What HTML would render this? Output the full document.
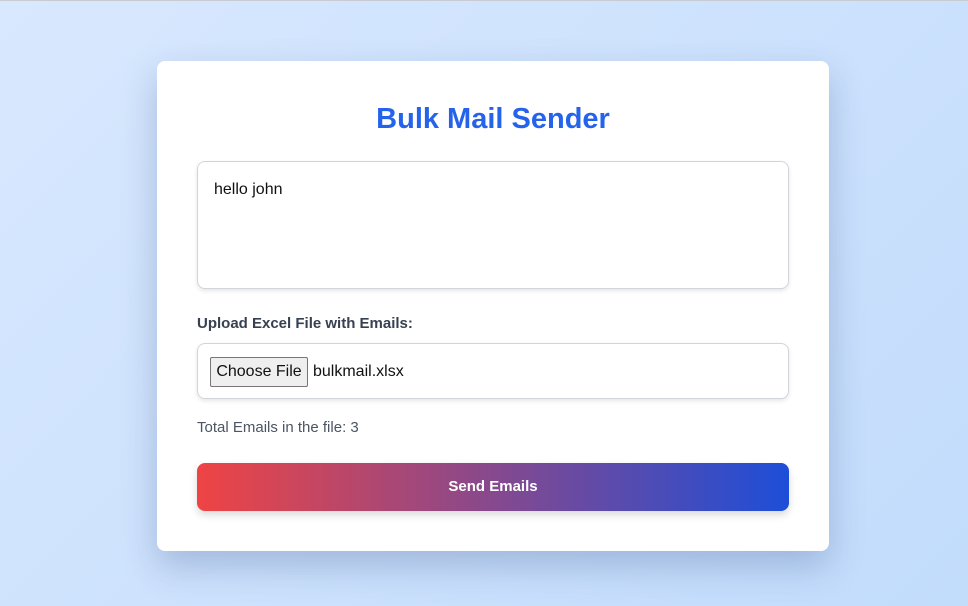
<!DOCTYPE html>
<html><head><style>
*{box-sizing:border-box;margin:0;padding:0}
body{width:968px;height:606px;overflow:hidden;font-family:"Liberation Sans",sans-serif;background:linear-gradient(135deg,#d8e8fe,#c2dcfc);border-top:1px solid #c8ccd2;position:relative}
.card{position:absolute;left:157px;top:60px;width:672px;height:490px;background:#fff;border-radius:8px;box-shadow:0 15px 35px rgba(30,60,120,.25)}
h1{position:absolute;left:0;right:0;top:42px;text-align:center;color:#2563eb;font-size:29px;font-weight:bold}
.ta{position:absolute;left:40px;top:100px;width:592px;height:128px;border:1px solid #d1d5db;border-radius:8px;box-shadow:0 2px 4px rgba(0,0,0,.1);padding:19px 16px;font-size:16px;color:#111}
.lbl{position:absolute;left:40px;top:254px;font-size:15px;font-weight:bold;color:#374151}
.fb{position:absolute;left:40px;top:282px;width:592px;height:56px;border:1px solid #d1d5db;border-radius:8px;box-shadow:0 2px 4px rgba(0,0,0,.1);font-size:16px;color:#111}
.btnf{position:absolute;left:12px;top:13px;width:98px;height:30px;border:1px solid #767676;border-radius:2px;background:#efefef;font-size:16px;line-height:28px;text-align:center}
.fn{position:absolute;left:115px;top:19px}
.tot{position:absolute;left:40px;top:358px;font-size:15px;color:#4b5563}
.send{position:absolute;left:40px;top:402px;width:592px;height:48px;border-radius:8px;background:linear-gradient(90deg,#ef4444,#1d4ed8);box-shadow:0 4px 8px rgba(0,0,0,.15);color:#fff;font-weight:bold;font-size:15px;text-align:center;line-height:48px}
</style></head><body>
<div class="card">
<h1>Bulk Mail Sender</h1>
<div class="ta">hello john</div>
<div class="lbl">Upload Excel File with Emails:</div>
<div class="fb"><div class="btnf">Choose File</div><span class="fn">bulkmail.xlsx</span></div>
<div class="tot">Total Emails in the file: 3</div>
<div class="send">Send Emails</div>
</div>
</body></html>
